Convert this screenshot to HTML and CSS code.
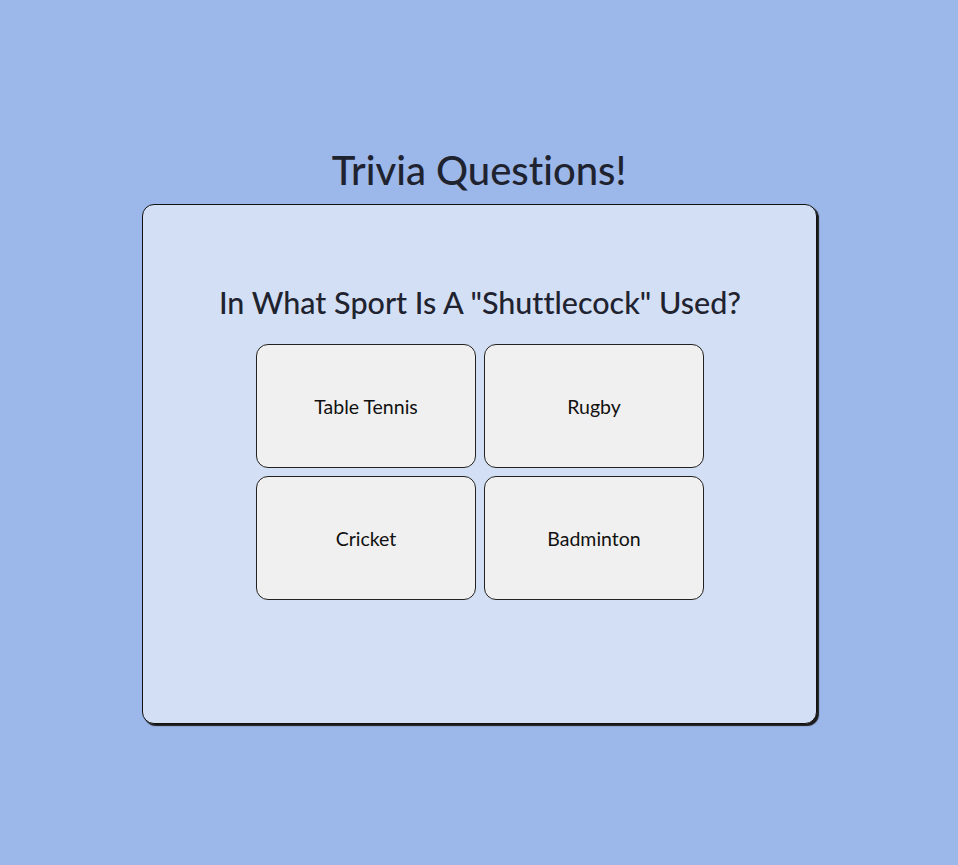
FILE: index.html
```html
<!DOCTYPE html>
<html lang="en">
<head>
<meta charset="utf-8">
<title>Trivia Questions!</title>
<link rel="stylesheet" href="styles.css">
</head>
<body>
<main class="page">
  <h1 class="title">Trivia Questions!</h1>
  <section class="card">
    <h2 class="question">In What Sport Is A "Shuttlecock" Used?</h2>
    <div class="answers">
      <button class="answer">Table Tennis</button>
      <button class="answer">Rugby</button>
      <button class="answer">Cricket</button>
      <button class="answer">Badminton</button>
    </div>
  </section>
</main>
</body>
</html>
```
FILE: styles.css
```css
html, body {
  margin: 0;
  padding: 0;
}
body {
  background: #9cb7e9;
  font-family: "Lato", "Noto Sans", sans-serif;
  font-variant-ligatures: none;
  color: #1f2330;
  min-height: 865px;
}
.page {
  display: flex;
  flex-direction: column;
  align-items: center;
  padding-top: 146px;
}
.title {
  margin: 0 0 10px;
  font-size: 40px;
  font-weight: 500;
  line-height: 48px;
}
.card {
  box-sizing: border-box;
  width: 675px;
  height: 520px;
  background: #d3dff5;
  border: 1px solid #111;
  border-radius: 12px;
  box-shadow: 2px 2px 1px #1a1a1a;
  display: flex;
  flex-direction: column;
  align-items: center;
  padding-top: 79px;
  padding-left: 2px;
}
.question {
  margin: 0 0 24px;
  font-size: 30.5px;
  font-weight: 500;
  line-height: 36px;
}
.answers {
  display: grid;
  grid-template-columns: 220px 220px;
  grid-auto-rows: 124px;
  gap: 8px;
}
.answer {
  background: #f0f0f0;
  border: 1px solid #222;
  border-radius: 12px;
  font-family: inherit;
  font-variant-ligatures: none;
  font-size: 19.5px;
  color: #111;
  cursor: pointer;
}
```
